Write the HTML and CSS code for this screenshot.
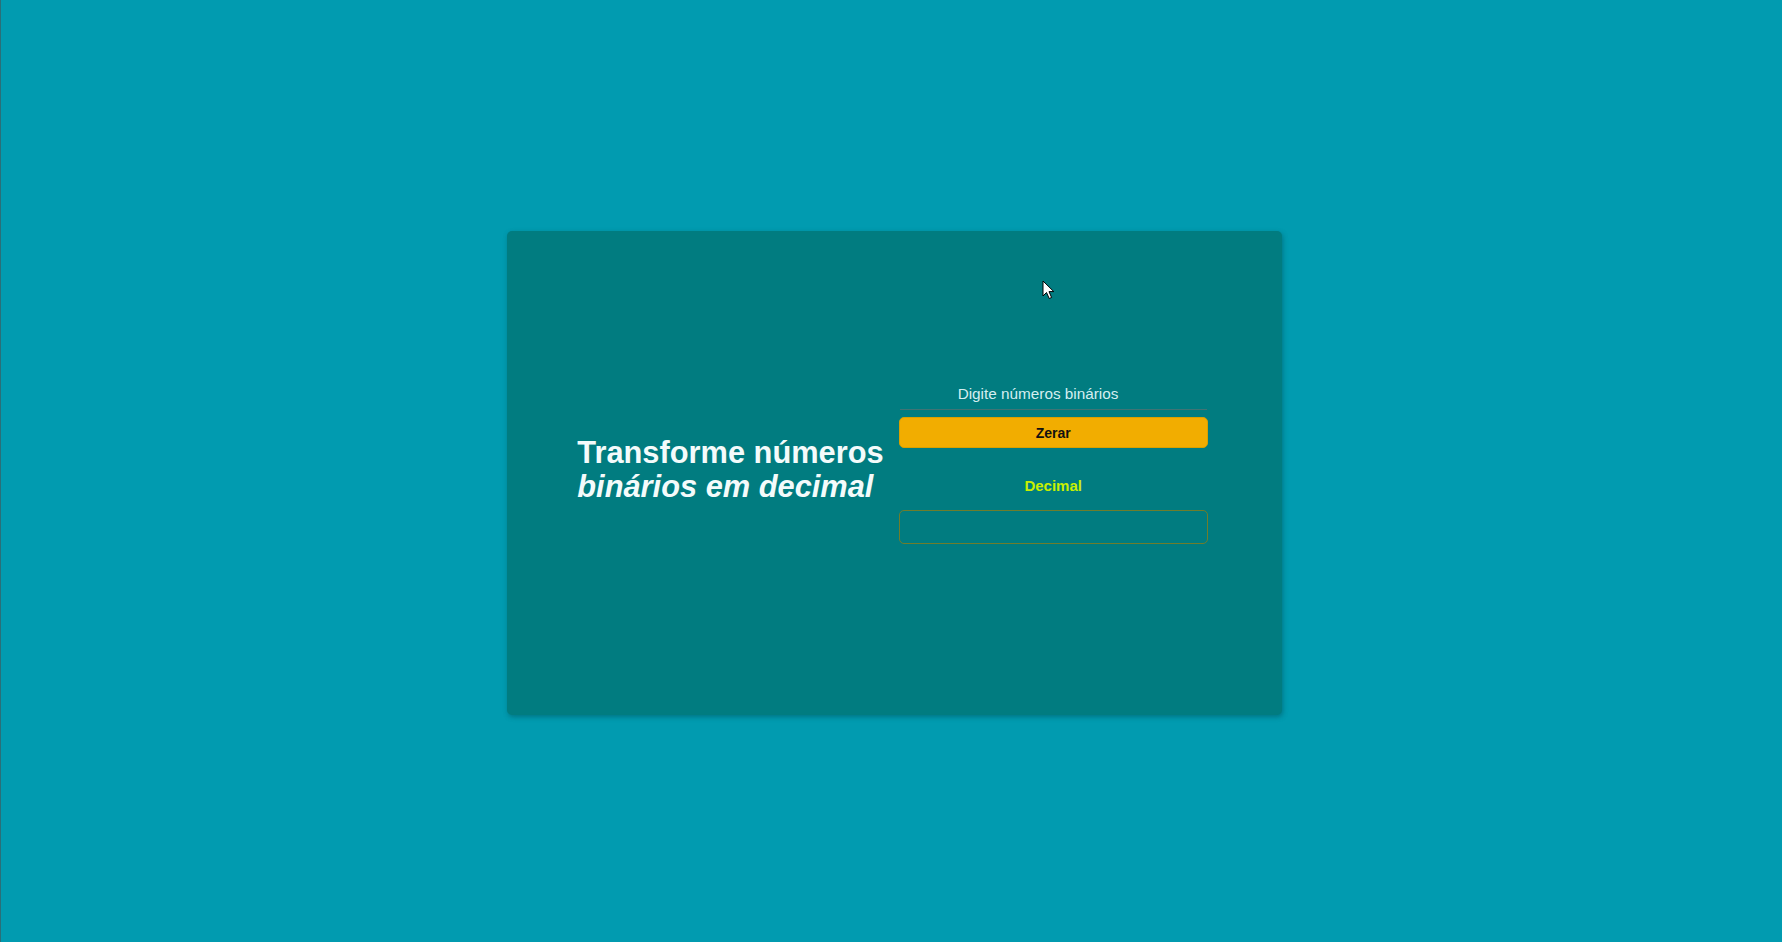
FILE: index.html
```html
<!DOCTYPE html>
<html lang="pt-BR">
<head>
<meta charset="utf-8">
<title>Binário para Decimal</title>
<link rel="stylesheet" href="styles.css">
</head>
<body>
<main class="card">
  <h1 class="title">Transforme números<br><em>binários em decimal</em></h1>
  <form class="form">
    <input class="binary-input" type="text" placeholder="Digite números binários">
    <button class="reset-btn" type="button">Zerar</button>
    <label class="result-label">Decimal</label>
    <div class="result-box"></div>
  </form>
</main>
<svg class="pointer" width="14" height="20" viewBox="0 0 14 20"><path d="M1 1 L1 16 L4.5 12.5 L7.2 18.5 L9.6 17.5 L7 11.6 L11.8 11.6 Z" fill="#fff" stroke="#000" stroke-width="1" stroke-linejoin="round"/></svg>
</body>
</html>
```
FILE: styles.css
```css
html, body {
  margin: 0;
  height: 100%;
}
body {
  background: #019bb0;
  border-left: 1px solid #2a6f78;
  box-sizing: border-box;
  display: flex;
  align-items: center;
  justify-content: center;
  padding-left: 5px;
  padding-top: 4px;
  font-family: "Liberation Sans", Arial, sans-serif;
  position: relative;
}
.card {
  width: 775px;
  height: 484px;
  background: #017c80;
  border-radius: 5px;
  box-shadow: 1px 2px 5px rgba(0, 70, 80, 0.45);
  display: flex;
  align-items: center;
  justify-content: center;
  gap: 15px;
  padding-right: 3px;
  box-sizing: border-box;
}
.title {
  margin: 0;
  padding-bottom: 7px;
  font-size: 30.8px;
  line-height: 34px;
  font-weight: 700;
  color: #f4fbfb;
  white-space: nowrap;
}
.title em {
  font-style: italic;
}
.form {
  width: 309px;
  display: flex;
  flex-direction: column;
  padding-bottom: 23px;
}
.binary-input {
  height: 31px;
  box-sizing: border-box;
  background: transparent;
  border: none;
  border-bottom: 1px solid #3f7475;
  padding: 0 0 0 58px;
  margin: 0 1px 7px;
  font-family: "Liberation Sans", Arial, sans-serif;
  font-size: 15.3px;
  color: #e6f6f6;
  outline: none;
}
.binary-input::placeholder {
  color: #d5eef0;
}
.reset-btn {
  height: 31px;
  background: #f2ad00;
  border: 1px solid #d9a000;
  border-radius: 5px;
  font-family: "Liberation Sans", Arial, sans-serif;
  font-weight: 700;
  font-size: 14px;
  color: #111;
  padding: 0;
}
.result-label {
  margin-top: 29px;
  text-align: center;
  font-weight: 700;
  font-size: 15px;
  line-height: 17px;
  color: #c8f000;
}
.result-box {
  margin-top: 16px;
  height: 34px;
  box-sizing: border-box;
  border: 1px solid #6f7d2c;
  border-radius: 5px;
}
.pointer {
  position: absolute;
  left: 1041px;
  top: 280px;
}
```
